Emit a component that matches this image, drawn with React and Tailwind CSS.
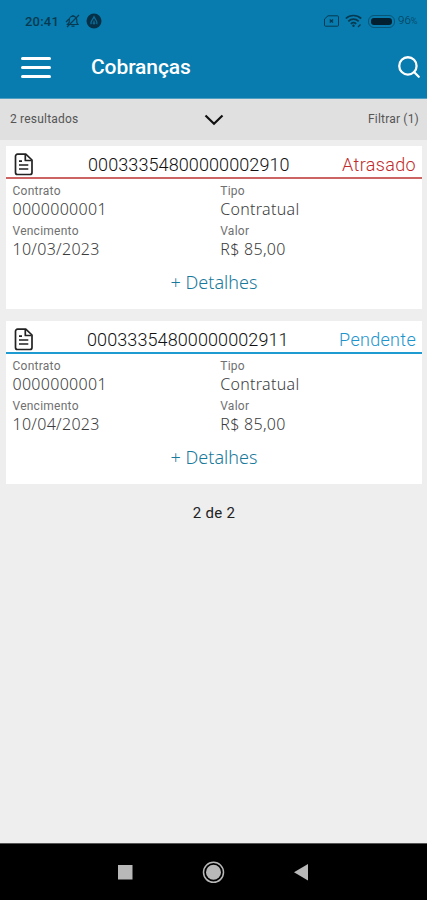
import { Search } from "lucide-react";

const cobrancas = [
    {
        numero: "00033354800000002910",
        status: "Atrasado",
        contrato: "0000000001",
        tipo: "Contratual",
        vencimento: "10/03/2023",
        valor: "R$ 85,00",
    },
    {
        numero: "00033354800000002911",
        status: "Pendente",
        contrato: "0000000001",
        tipo: "Contratual",
        vencimento: "10/04/2023",
        valor: "R$ 85,00",
    },
];

function StatusBar() {
    return (
        <div className="flex h-[42px] items-center pl-[25px] pr-[8px] text-[#063a52]">
            <span className="w-[35px] text-[13px] font-medium leading-none tracking-[0.2px]">20:41</span>

            {/* muted bell */}
            <svg className="ml-[5px] h-4 w-4" viewBox="0 0 16 16" fill="none" stroke="currentColor" strokeWidth="1.2">
                <path d="M2.5 11.5h10.5l-1.2-2V7A3.8 3.8 0 0 0 4.2 7v2.5z" />
                <path d="M8 3.2V2M6.5 13.2h3M2 14 14 2M1 9l3-3" />
            </svg>

            <svg className="ml-[5px] h-4 w-4" viewBox="0 0 16 16">
                <circle cx="8" cy="8" r="7.5" fill="#063047" />
                <path d="M5.2 11.3C3.8 8.8 6.6 7.3 8 3.8c1.4 3.5 4.2 5 2.8 7.5M8 7.5v4M6.7 10.2h2.6" fill="none" stroke="#0a6e9a" strokeWidth="1.2" />
            </svg>

            <div className="ml-auto flex items-center">
                <svg className="h-3 w-[15px]" viewBox="0 0 15 12" fill="none" stroke="currentColor" strokeWidth="1">
                    <path d="M4 .8h9.5a1 1 0 0 1 1 1v8.4a1 1 0 0 1-1 1h-12a1 1 0 0 1-1-1V4z" />
                    <path d="m5.800 4.600 3.200 3M9 4.600l-3.200 3" strokeWidth="1.4" />
                </svg>
                <svg className="ml-[6px] h-[14px] w-[17px]" viewBox="0 0 17 14" fill="none" stroke="currentColor" strokeWidth="1.7">
                    <path d="M.8 4.5c4.3-4 11-4 15.400 0M3.300 7.300c3-2.800 7.400-2.800 10.400 0M5.800 9.900c1.600-1.400 3.800-1.400 5.400 0" />
                    <circle cx="8.5" cy="11.8" r="1.2" fill="currentColor" stroke="none" />
                    <path d="m13 13 2.500-2.500" strokeWidth="1.2" />
                </svg>
                <div className="ml-[6px] h-[13px] w-[27px] rounded-[6px] border border-[#075577] p-[2px]">
                    <div className="h-full rounded-[3px] bg-[#02202f]"></div>
                </div>
                <span className="ml-[3px] w-[21px] whitespace-nowrap text-[11.5px] font-light leading-none">96<span className="text-[9px]">%</span></span>
            </div>
        </div>
    );
}

function Campo({ label, children }) {
    return (
        <div className="h-[40px]">
            <p className="h-[16px] text-[12px] leading-[16px] tracking-[0.25px] text-[#707070]">{label}</p>
            <p className="h-[20px] font-['Noto_Sans'] text-[16px] font-light leading-[20px] tracking-[0.3px] text-[#3c3c3c]">{children}</p>
        </div>
    );
}

function Card({ item }) {
    const atrasado = item.status === "Atrasado";

    return (
        <div className="h-[163px] bg-white">
            <div className={`flex h-[33px] items-center border-b-2 pl-[8px] pr-[6px] pt-[5px] ${atrasado ? "border-[#cd6464]" : "border-[#1e9bd0]"}`}>
                <svg className="h-[23px] w-[20px]" viewBox="0 0 20 23" fill="none" stroke="#222" strokeWidth="1.7" strokeLinejoin="round">
                    <path d="M3.500 1.200h8.300L18 7v12.500a2 2 0 0 1-2 2H3.500a2 2 0 0 1-2-2v-16.300a2 2 0 0 1 2-2z" />
                    <path d="M11.300 1.500v6h6.200" />
                    <path d="M5 8.200h3M5 12h9.300M5 16h9.300" />
                </svg>
                <p className={`text-[18px] font-light leading-none tracking-[0.1px] text-[#111] pt-[2px] ${atrasado ? "ml-[54px]" : "ml-[53px]"}`}>{item.numero}</p>
                <p className={`ml-auto pt-[2px] text-[18px] font-light leading-none ${atrasado ? "text-[#c02b2b] tracking-[0.35px]" : "text-[#1e94cc] tracking-[0.3px]"}`}>
                    {item.status}
                </p>
            </div>
            <div className="grid grid-cols-2 pl-[6.5px] pt-[4px]">
                <Campo label="Contrato">{item.contrato}</Campo>
                <div className="pl-[3px]">
                    <Campo label="Tipo">{item.tipo}</Campo>
                </div>
                <Campo label="Vencimento">{item.vencimento}</Campo>
                <div className="pl-[3px]">
                    <Campo label="Valor">{item.valor}</Campo>
                </div>
            </div>
            <button className="block h-[38px] w-full text-center font-['Noto_Sans'] text-[18px] font-light leading-[37px] text-[#18799a]">
                + Detalhes
            </button>
        </div>
    );
}

export default function App() {
    return (
        <div className="flex h-[900px] w-[427px] flex-col overflow-hidden bg-[#eeeeee] font-[Roboto,sans-serif]">
            <header className="h-[99px] border-b border-[#4f9fc2] bg-[#087cae]">
                <StatusBar />
                <div className="flex h-[50px] items-center pl-[21px] pr-[5px] text-white">
                    <div className="flex w-[30px] flex-col gap-[6px]">
                        <span className="h-[3px] rounded-full bg-white"></span>
                        <span className="h-[3px] rounded-full bg-white"></span>
                        <span className="h-[3px] rounded-full bg-white"></span>
                    </div>
                    <h1 className="ml-[40px] pt-px text-[21px] font-medium leading-none tracking-[-0.1px]">Cobranças</h1>
                    <Search className="ml-auto" size={26} strokeWidth={2.1} />
                </div>
            </header>

            <div className="grid h-[41px] grid-cols-3 items-center bg-[#e0e0e0] pl-[10px] pr-[8px] pb-[2px] text-[12px] tracking-[0.2px] text-[#555]">
                <span>2 resultados</span>
                <svg className="mx-auto mt-[2px] h-[12px] w-[20px]" viewBox="0 0 20 12" fill="none" stroke="#111" strokeWidth="2.2">
                    <path d="m1.500 1.500 8.500 8.300 8.500-8.300" />
                </svg>
                <span className="text-right">Filtrar (1)</span>
            </div>

            <main className="flex flex-1 flex-col gap-[12px] pl-[6px] pr-[5px] pt-[6px]">
                {cobrancas.map((item) => (
                    <Card key={item.numero} item={item} />
                ))}
                <p className="pt-[5px] text-center text-[15px] leading-[24px] tracking-[0.3px] text-[#222]">2 de 2</p>
            </main>

            <nav className="h-[57px] border-t border-[#555] bg-black">
                <svg className="h-full w-full" viewBox="0 0 427 56">
                    <rect x="118" y="21" width="14.500" height="14.500" fill="#b8b8b8" />
                    <circle cx="213.500" cy="28.300" r="10" fill="none" stroke="#b8b8b8" strokeWidth="1.5" />
                    <circle cx="213.500" cy="28.300" r="7.500" fill="#b8b8b8" />
                    <path d="M294 28.300 308 20v16.600z" fill="#b8b8b8" />
                </svg>
            </nav>
        </div>
    );
}
